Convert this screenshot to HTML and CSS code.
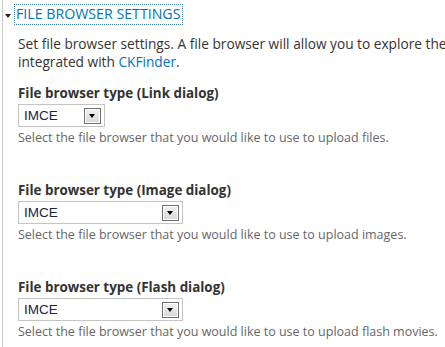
FILE: index.html
```html
<!DOCTYPE html>
<html lang="en">
<head>
  <meta charset="UTF-8" />
  <title>File browser settings</title>
  <link rel="stylesheet" href="styles.css">
</head>
<body>
  <div class="fieldset">
    <div class="legend">
      <span class="arrow"></span>
      <a href="#" class="legend-link">File browser settings</a>
    </div>
    <div class="fieldset-body">
      <p class="intro">Set file browser settings. A file browser will allow you to explore the files on the server and select them as links, images or flash movies. Currently IMCE is supported, and also<br>integrated with <a href="#">CKFinder</a>.</p>

      <div class="form-item">
        <label>File browser type (Link dialog)</label>
        <div class="select narrow"><span class="select-value">IMCE</span><span class="select-btn"></span></div>
        <div class="description">Select the file browser that you would like to use to upload files.</div>
      </div>

      <div class="form-item">
        <label>File browser type (Image dialog)</label>
        <div class="select"><span class="select-value">IMCE</span><span class="select-btn"></span></div>
        <div class="description">Select the file browser that you would like to use to upload images.</div>
      </div>

      <div class="form-item">
        <label>File browser type (Flash dialog)</label>
        <div class="select"><span class="select-value">IMCE</span><span class="select-btn"></span></div>
        <div class="description">Select the file browser that you would like to use to upload flash movies.</div>
      </div>
    </div>
  </div>
</body>
</html>
```

FILE: styles.css
```css
body {
  margin: 0;
  background: #fff;
  font-family: "Open Sans", "DejaVu Sans", sans-serif;
  color: #333;
  overflow: hidden;
}
a {
  color: #0074bd;
  text-decoration: none;
}
.fieldset {
  margin-left: 2px;
  border-left: 1px solid #c8c8c8;
  padding: 4px 0 0 2px;
  min-height: 347px;
  box-sizing: border-box;
}
.legend {
  display: flex;
  align-items: center;
  height: 21px;
}
.arrow {
  width: 0;
  height: 0;
  border-left: 3px solid transparent;
  border-right: 3px solid transparent;
  border-top: 4px solid #222;
  margin: 2px 4px 0 0;
}
.legend-link {
  font-size: 14.2px;
  text-transform: uppercase;
  outline: 1px dotted #3a7cbf;
  outline-offset: 0;
  padding: 1px 2px 2px 1px;
  line-height: 16px;
}
.fieldset-body {
  padding: 10px 0 0 13px;
}
.intro {
  margin: 0;
  font-size: 13.7px;
  line-height: 18px;
  white-space: nowrap;
}
.form-item {
  margin-top: 14px;
  margin-bottom: 37px;
}
.form-item + .form-item {
  margin-top: 0;
}
.form-item label {
  display: block;
  font-weight: bold;
  font-size: 13.4px;
  line-height: 16px;
  margin-bottom: 3px;
}
.select {
  display: flex;
  align-items: center;
  justify-content: space-between;
  box-sizing: border-box;
  width: 165px;
  height: 23px;
  border: 1px solid #c4c4c4;
  font-family: "Liberation Sans", Arial, sans-serif;
  font-size: 13.5px;
  color: #1b2540;
}
.select.narrow {
  width: 87px;
}
.select-value {
  padding-left: 5px;
}
.select-btn {
  position: relative;
  box-sizing: border-box;
  width: 17px;
  height: 16px;
  margin-right: 3px;
  border: 1px solid #707070;
  box-shadow: inset 0 0 0 1px #fff;
  background: linear-gradient(#f2f2f2, #d8d8d8);
}
.select-btn::after {
  content: "";
  position: absolute;
  left: 4px;
  top: 5px;
  border-left: 3.5px solid transparent;
  border-right: 3.5px solid transparent;
  border-top: 4px solid #000;
}
.description {
  margin-top: 3px;
  font-size: 12.5px;
  line-height: 15px;
  color: #666;
  white-space: nowrap;
}
```
